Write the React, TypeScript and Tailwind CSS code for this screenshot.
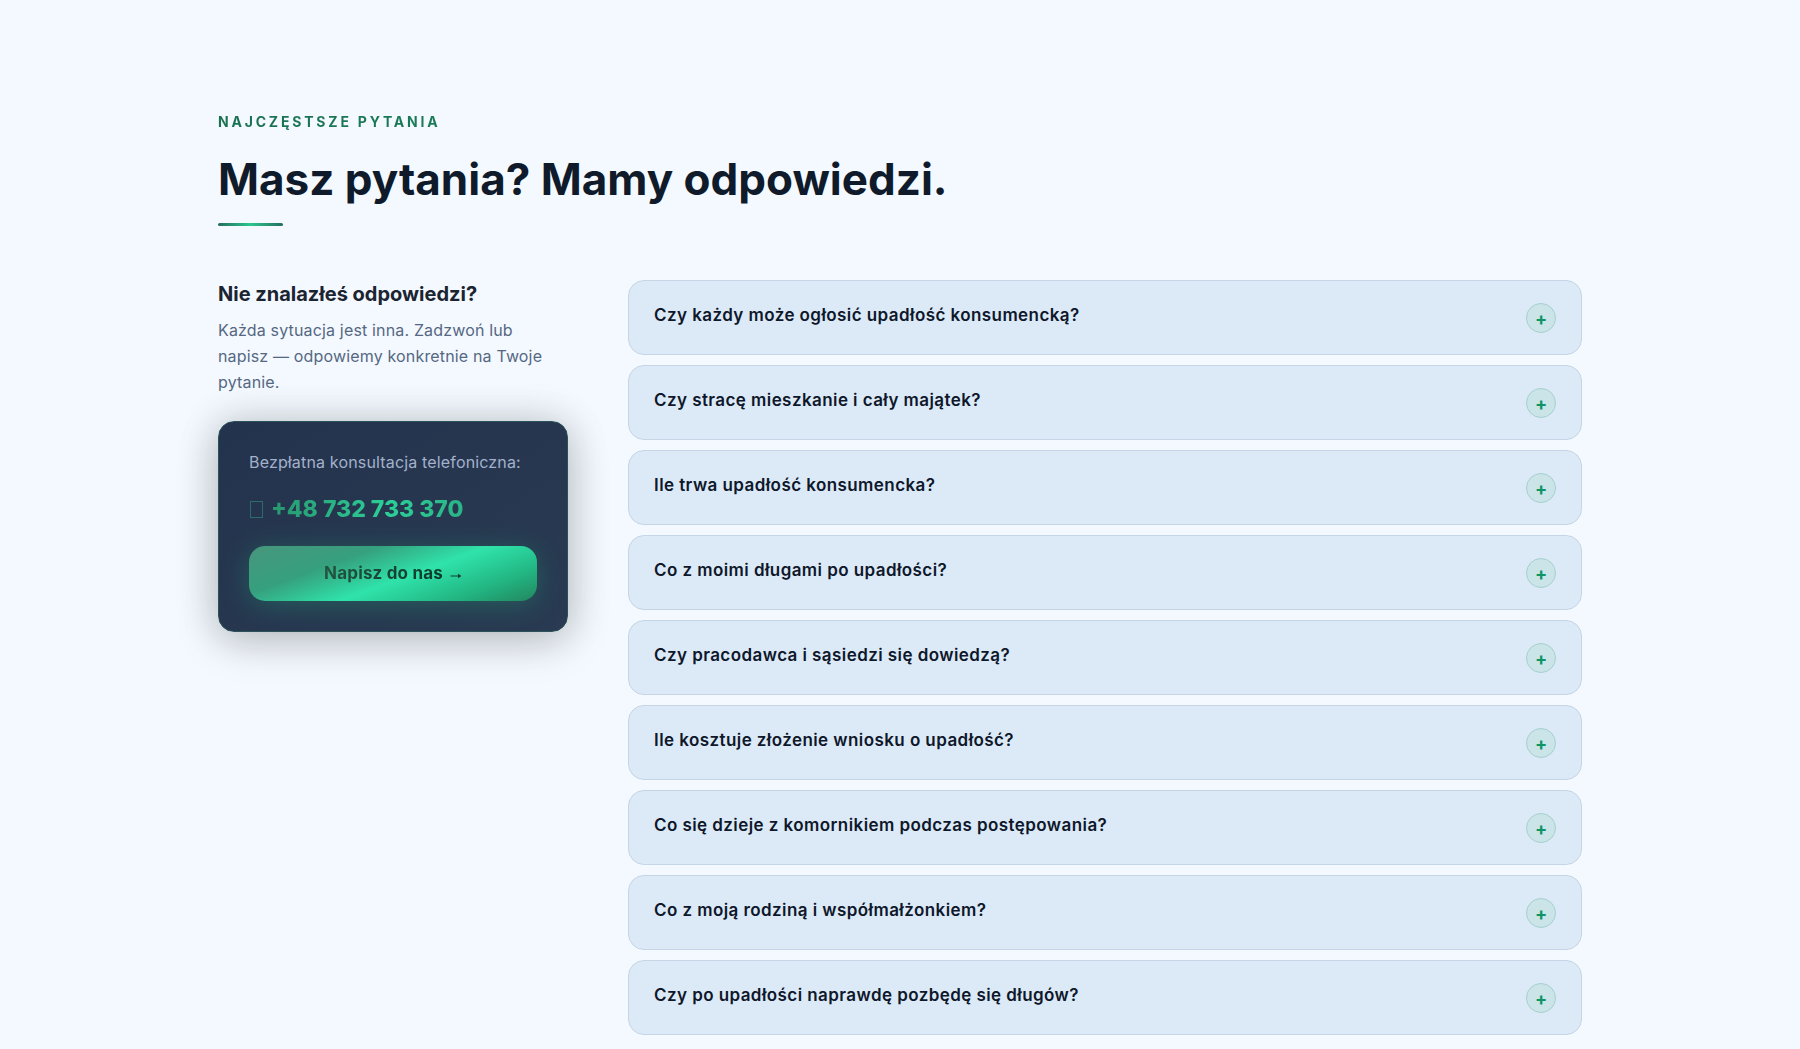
import React, { useState } from 'react';

interface FaqItem {
  question: string;
  answer: string;
}

const faqItems: FaqItem[] = [
  { question: 'Czy każdy może ogłosić upadłość konsumencką?', answer: 'Tak, jeśli nie prowadzisz działalności i jesteś niewypłacalny.' },
  { question: 'Czy stracę mieszkanie i cały majątek?', answer: 'Nie zawsze. Każdą sytuację analizujemy indywidualnie.' },
  { question: 'Ile trwa upadłość konsumencka?', answer: 'Zależy to od sądu i liczby wierzycieli.' },
  { question: 'Co z moimi długami po upadłości?', answer: 'Po wykonaniu planu spłaty pozostałe długi są umarzane.' },
  { question: 'Czy pracodawca i sąsiedzi się dowiedzą?', answer: 'Nikt nie informuje sąsiadów o postępowaniu.' },
  { question: 'Ile kosztuje złożenie wniosku o upadłość?', answer: 'Opłata sądowa od wniosku wynosi 30 zł.' },
  { question: 'Co się dzieje z komornikiem podczas postępowania?', answer: 'Egzekucje komornicze zostają zawieszone.' },
  { question: 'Co z moją rodziną i współmałżonkiem?', answer: 'Wyjaśnimy to podczas bezpłatnej konsultacji.' },
  { question: 'Czy po upadłości naprawdę pozbędę się długów?', answer: 'Tak, taki jest cel postępowania.' },
];

interface FaqCardProps {
  item: FaqItem;
  isOpen: boolean;
  onToggle: () => void;
}

const FaqCard: React.FC<FaqCardProps> = ({ item, isOpen, onToggle }) => (
  <div className="rounded-2xl border border-[#c5d5e5] bg-[#dceaf8]">
    <button
      type="button"
      aria-expanded={isOpen}
      onClick={onToggle}
      className="flex w-full cursor-pointer items-start justify-between gap-4 px-[25px] pt-[22px] pb-[21px] text-left"
    >
      <span className="text-[17px] leading-6 font-semibold tracking-wide text-[#0f172a]">{item.question}</span>
      <span
        aria-hidden="true"
        className="flex size-[30px] shrink-0 items-center justify-center rounded-full border border-[#a5d0cf] bg-[#cbe4e7] pt-[2px] text-lg leading-none font-bold text-[#0f9563]"
      >
        {isOpen ? '−' : '+'}
      </span>
    </button>
    {isOpen && <p className="px-[25px] pb-5 text-base leading-[26px] text-[#475569]">{item.answer}</p>}
  </div>
);

const ContactCard: React.FC = () => (
  <div className="rounded-2xl border border-[#2b5258] bg-linear-to-br from-[#24334d] to-[#293a52] p-[30px] shadow-[0_10px_44px_rgba(0,0,0,0.18),0_0_40px_rgba(20,60,30,0.16)]">
    <p className="text-base leading-5 tracking-[0.01em] text-[#a3b1cc]">Bezpłatna konsultacja telefoniczna:</p>
    <a href="tel:+48732733370" className="mt-4 flex items-center gap-2 text-[23px] leading-[42px] font-extrabold">
      <span aria-hidden="true" className="ml-px h-[17px] w-[13px] border border-[#2d6b68]" />
      <span className="bg-linear-to-r from-[#27966f] via-[#2ccf98] via-60% to-[#2ab487] bg-clip-text text-transparent">
        +48 732 733 370
      </span>
    </a>
    <button
      type="button"
      className="mt-4 flex h-[55px] w-full cursor-pointer items-center justify-center gap-[7px] rounded-2xl bg-[linear-gradient(160deg,#47967c_0%,#36a07e_30%,#2fe3aa_55%,#22b582_80%,#23865e_100%)] pt-px text-[17px] font-bold shadow-[0_4px_28px_rgba(34,197,130,0.28)]"
    >
      <span className="bg-linear-to-r from-[#23543f] to-[#0c3a2a] bg-clip-text tracking-[0.01em] text-transparent">Napisz do nas</span>
      {/* thin arrow */}
      <svg aria-hidden="true" viewBox="0 0 12 8" className="mt-1 h-2 w-3" fill="none" stroke="#11402f">
        <path d="M0.5 4H10" />
        <path d="M8 1.8L11.5 4L8 6.2Z" fill="#11402f" stroke="none" />
      </svg>
    </button>
  </div>
);

export default function App() {
  const [openIndex, setOpenIndex] = useState<number | null>(null);

  return (
    <section className="min-h-screen bg-[#f4f8ff] px-6 pt-[110px] pb-[14px] font-['Inter',sans-serif]">
      <div className="mx-auto max-w-[1364px]">
        <p className="bg-linear-to-r from-[#197150] to-[#1d9669] to-60% bg-clip-text text-sm leading-6 font-bold tracking-[0.2em] text-transparent uppercase">
          Najczęstsze pytania
        </p>
        <h2 className="mt-[18px] text-[44px] leading-[54px] font-bold text-[#0f1b2a]">Masz pytania? Mamy odpowiedzi.</h2>
        <div className="mt-[17px] h-[3px] w-[65px] rounded-full bg-linear-to-r from-[#246f5e] via-[#2bc78e] to-[#246f5e]" />

        <div className="mt-[54px] grid grid-cols-1 gap-[60px] lg:grid-cols-[350px_1fr]">
          <aside>
            <h3 className="text-xl leading-7 font-bold text-[#1b2431]">Nie znalazłeś odpowiedzi?</h3>
            <p className="mt-[9px] mb-[26px] pr-2 text-base leading-[26px] tracking-[0.01em] text-[#556882]">
              Każda sytuacja jest inna. Zadzwoń lub napisz — odpowiemy konkretnie na Twoje pytanie.
            </p>
            <ContactCard />
          </aside>

          <div className="flex flex-col gap-[10px]">
            {faqItems.map((item, index) => (
              <FaqCard
                key={item.question}
                item={item}
                isOpen={openIndex === index}
                onToggle={() => setOpenIndex(openIndex === index ? null : index)}
              />
            ))}
          </div>
        </div>
      </div>
    </section>
  );
}
